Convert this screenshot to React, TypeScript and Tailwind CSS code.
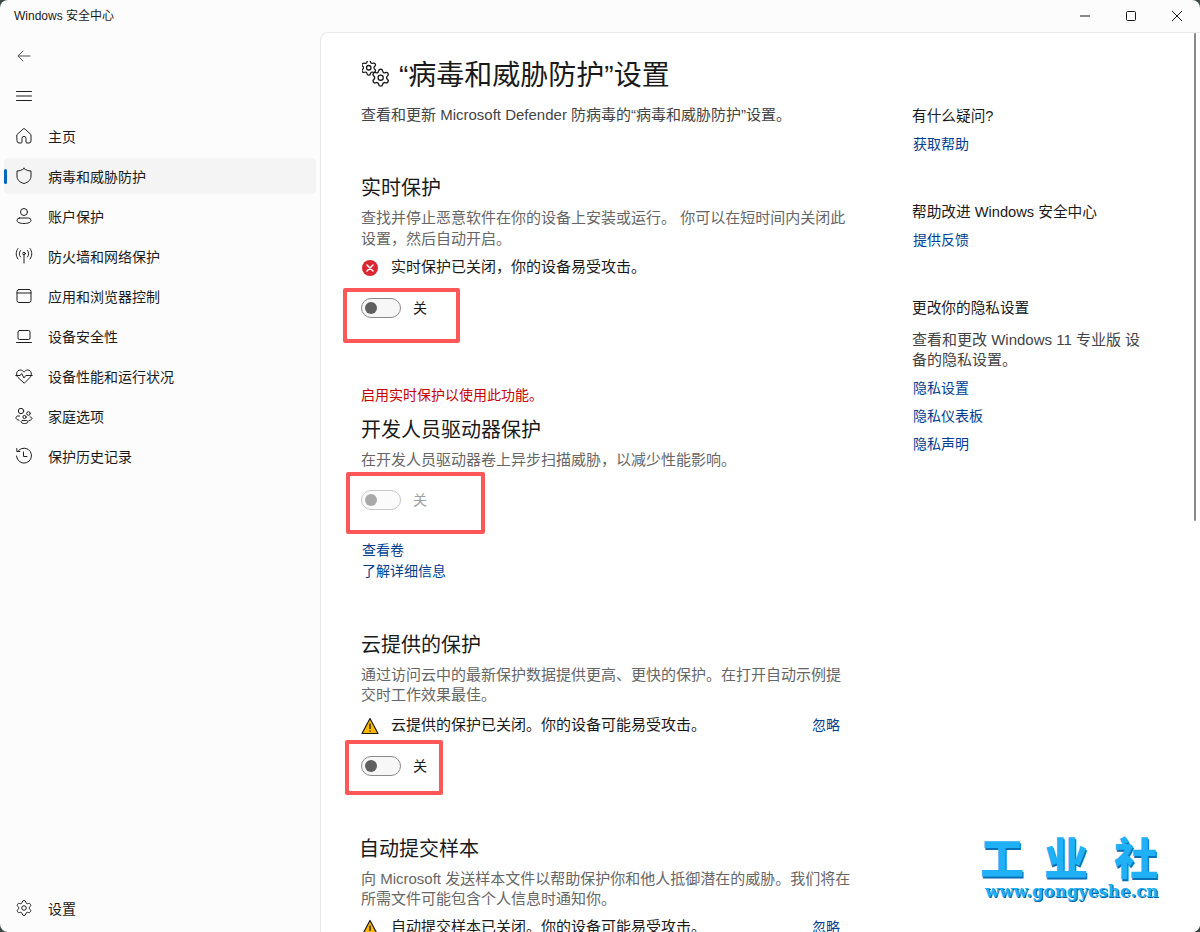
import type { ReactNode } from "react";

const gearPath =
  "M9.671 4.136a2.34 2.34 0 0 1 4.659 0 2.34 2.34 0 0 0 3.319 1.915 2.34 2.34 0 0 1 2.33 4.033 2.34 2.34 0 0 0 0 3.831 2.34 2.34 0 0 1-2.33 4.033 2.34 2.34 0 0 0-3.319 1.915 2.34 2.34 0 0 1-4.659 0 2.34 2.34 0 0 0-3.32-1.915 2.34 2.34 0 0 1-2.33-4.033 2.34 2.34 0 0 0 0-3.831A2.34 2.34 0 0 1 6.35 6.051a2.34 2.34 0 0 0 3.319-1.915";

function Icon({ children }: { children: ReactNode }) {
  return (
    <svg width="18" height="18" viewBox="0 0 18 18" fill="none" stroke="#1f1f1f" strokeWidth="1" strokeLinecap="round" strokeLinejoin="round" className="shrink-0">
      {children}
    </svg>
  );
}

const icons: Record<string, ReactNode> = {
  home: <path d="M2 7.7 8.2 1.9a1.2 1.2 0 0 1 1.6 0L16 7.7V14a2 2 0 0 1-2 2h-2a1 1 0 0 1-1-1v-3.6a2 2 0 0 0-4 0V15a1 1 0 0 1-1 1H4a2 2 0 0 1-2-2Z" />,
  shield: <path d="M9 1.5c2 1.6 4.2 2.4 7 2.5v5c0 3.7-2.4 6.2-7 7.5-4.6-1.3-7-3.8-7-7.5V4c2.800-.1 5-.9 7-2.500Z" />,
  user: (
    <>
      <circle cx="9" cy="5" r="3.500" />
      <path d="M4.500 11h9a2.500 2.500 0 0 1 2.500 2.500c0 1.800-3 3-7 3s-7-1.200-7-3A2.500 2.500 0 0 1 4.500 11Z" />
    </>
  ),
  radio: (
    <>
      <circle cx="9" cy="6.500" r="1.300" />
      <path d="M9 8v8M5.500 3.500c-1.600 1.800-1.600 4.700 0 6.500M12.500 3.500c1.600 1.800 1.600 4.700 0 6.500M3 1.500C.6 4.500.6 9 3 12M15 1.500c2.400 3 2.400 7.500 0 10.500" />
    </>
  ),
  app: (
    <>
      <rect x="2" y="2.500" width="14" height="13" rx="2" />
      <path d="M2 6h14" />
    </>
  ),
  laptop: (
    <>
      <rect x="3" y="3.500" width="12" height="9" rx="1.500" />
      <path d="M1.500 15.500h15" />
    </>
  ),
  heart: <path d="M9 16 3 10.500C.5 8 1.500 3 5.200 3 7 3 8.200 4 9 5.200 9.800 4 11 3 12.800 3c3.700 0 4.700 5 2.200 7.500ZM.8 8.500h4.400l1.500-2 2.300 4.500 1.800-2.500h6.400" />,
  family: (
    <>
      <circle cx="6" cy="4" r="2.700" />
      <circle cx="13.500" cy="6.500" r="1.800" />
      <circle cx="9.500" cy="10" r="1.600" />
      <path d="M4.500 9H2.800C1.800 9 1 9.800 1 10.800c0 1.300 1.200 2.200 3 2.400M15 10h.5c.8 0 1.500.7 1.500 1.500 0 1-1 1.800-3 2M7.500 13.500h4c.8 0 1.500.7 1.500 1.300 0 .9-1.500 1.700-3.500 1.700S6 15.700 6 14.800c0-.6.700-1.300 1.500-1.300Z" />
    </>
  ),
  history: (
    <>
      <path d="M3.500 3.500A7.500 7.500 0 1 1 1.500 9M1.800 1.500v3h3" />
      <path d="M8.500 5v4.500h3.500" />
    </>
  ),
};

const navItems = [
  { icon: "home", label: "主页" },
  { icon: "shield", label: "病毒和威胁防护", active: true },
  { icon: "user", label: "账户保护" },
  { icon: "radio", label: "防火墙和网络保护" },
  { icon: "app", label: "应用和浏览器控制" },
  { icon: "laptop", label: "设备安全性" },
  { icon: "heart", label: "设备性能和运行状况" },
  { icon: "family", label: "家庭选项" },
  { icon: "history", label: "保护历史记录" },
];

function NavRow({ icon, label, active }: { icon: ReactNode; label?: string; active?: boolean }) {
  return (
    <div className="h-10 flex items-center">
      <div className={`relative w-[312px] h-9 ml-1 flex items-center pl-[11px] gap-[15px] rounded-[5px] ${active ? "bg-[#f4f4f4]" : ""}`}>
        {active && <span className="absolute left-0 top-[11px] w-[3px] h-[15px] rounded-full bg-[#0067c0]" />}
        {icon}
        {label && <span className="mt-[2px] text-[14px] leading-5 text-[#1a1a1a]">{label}</span>}
      </div>
    </div>
  );
}

function Toggle({ disabled }: { disabled?: boolean }) {
  return (
    <div className="flex items-center h-5">
      <div className={`w-10 h-5 rounded-full border flex items-center pl-[3px] ${disabled ? "border-[#c6c6c6] bg-[#fbfbfb]" : "border-[#8a8a8a] bg-[#f7f7f7]"}`}>
        <span className={`w-3 h-3 rounded-full ${disabled ? "bg-[#a9a9a9]" : "bg-[#5f5f5f]"}`} />
      </div>
      <span className={`ml-3 text-[14px] leading-5 ${disabled ? "text-[#a0a0a0]" : "text-[#1a1a1a]"}`}>关</span>
    </div>
  );
}

function Warn() {
  return (
    <svg width="18" height="18" viewBox="0 0 18 18" className="shrink-0">
      <path d="M9 1.500 17 16.500H1Z" fill="#fcb900" stroke="#1a1a1a" strokeWidth="1.200" strokeLinejoin="round" />
      <path d="M9 6.500v5.500M9 13.500v1.300" stroke="#1a1a1a" strokeWidth="1.300" />
    </svg>
  );
}

function ErrorIcon() {
  return (
    <svg width="16" height="16" viewBox="0 0 16 16" className="shrink-0 ml-[1px]">
      <circle cx="8" cy="8" r="8" fill="#dc2632" />
      <path d="M5 5l6 6M11 5l-6 6" stroke="#fff" strokeWidth="1.500" strokeLinecap="round" />
    </svg>
  );
}

function Status({ icon, text, dismiss }: { icon: ReactNode; text: string; dismiss?: boolean }) {
  return (
    <div className="flex items-center h-5 text-[15px] leading-5 text-[#1a1a1a]">
      <span className="w-[30px] flex items-center">{icon}</span>
      <span className="mb-[2px] whitespace-nowrap">{text}</span>
      {dismiss && <a className="mb-[2px] ml-auto mr-[14px] text-[14px] text-[#003e92]">忽略</a>}
    </div>
  );
}

function Heading({ children, className }: { children: ReactNode; className: string }) {
  return <h2 className={`text-[20px] leading-7 text-[#1a1a1a] ${className}`}>{children}</h2>;
}

function Desc({ children, className }: { children: ReactNode; className: string }) {
  return <p className={`text-[15px] text-[#666666] ${className}`}>{children}</p>;
}

function Highlight({ className }: { className: string }) {
  return <div className={`absolute border-[4px] border-[#ff5757] rounded-[2px] ${className}`} />;
}

function SideLink({ children, className = "" }: { children: ReactNode; className?: string }) {
  return <a className={`block ml-px text-[14px] leading-5 text-[#003e92] ${className}`}>{children}</a>;
}

export default function App() {
  return (
    <div lang="zh-CN" className="w-[1200px] h-[932px] overflow-hidden bg-[#3a4a44] font-['Liberation_Sans','Noto_Sans_CJK_SC',sans-serif]">
      <div className="relative w-full h-full rounded-[8px] overflow-hidden bg-[#fcfcfc] flex flex-col">
        {/* title bar */}
        <div className="h-8 shrink-0 flex items-center justify-between">
          <span className="ml-[14px] text-[12px] text-[#1a1a1a]">Windows 安全中心</span>
          <div className="flex items-center">
            <div className="w-[46px] h-8 flex items-center justify-center">
              <svg width="10" height="10" viewBox="0 0 10 10"><path d="M0 5h10" stroke="#1a1a1a" /></svg>
            </div>
            <div className="w-[46px] h-8 flex items-center justify-center">
              <svg width="10" height="10" viewBox="0 0 10 10" fill="none"><rect x=".5" y=".5" width="9" height="9" rx="1" stroke="#1a1a1a" /></svg>
            </div>
            <div className="w-[46px] h-8 flex items-center justify-center">
              <svg width="10" height="10" viewBox="0 0 10 10"><path d="M0 0l10 10M10 0 0 10" stroke="#1a1a1a" /></svg>
            </div>
          </div>
        </div>

        <div className="flex-1 flex min-h-0">
          {/* sidebar */}
          <aside className="w-[320px] shrink-0 flex flex-col pt-1 pb-1">
            <NavRow
              icon={
                <Icon>
                  <path d="M15 9H3M8 4 3 9l5 5" stroke="#555" />
                </Icon>
              }
            />
            <NavRow
              icon={
                <Icon>
                  <path d="M1.500 4.500h15M1.500 9h15M1.500 13.500h15" />
                </Icon>
              }
            />
            {navItems.map((n) => (
              <NavRow key={n.label} icon={<Icon>{icons[n.icon]}</Icon>} label={n.label} active={n.active} />
            ))}
            <div className="mt-auto">
              <NavRow
                icon={
                  <svg width="18" height="18" viewBox="0 0 24 24" fill="none" stroke="#1f1f1f" strokeWidth="1.300" className="shrink-0">
                    <path d={gearPath} />
                    <circle cx="12" cy="12" r="3" />
                  </svg>
                }
                label="设置"
              />
            </div>
          </aside>

          {/* main panel */}
          <main className="relative flex-1 flex bg-white border-l border-t border-[#e8e8e8] rounded-tl-[8px] overflow-hidden pl-10 pt-6">
            <div className="w-[493px] shrink-0">
              <div className="flex items-center h-9">
                <svg width="28" height="28" viewBox="0 0 28 28" fill="none" stroke="#1a1a1a" className="shrink-0 ml-[1px] mr-[9px]">
                  <g transform="translate(-2.250 -2.250) scale(.75)" strokeWidth="1.700">
                    <path d={gearPath} />
                    <circle cx="12" cy="12" r="3" />
                  </g>
                  <g transform="translate(8.450 6.500) scale(.85)" strokeWidth="1.600">
                    <path d={gearPath} />
                    <circle cx="12" cy="12" r="3" />
                  </g>
                </svg>
                <h1 className="mt-[2px] text-[28px] leading-9 text-[#1a1a1a] whitespace-nowrap">“病毒和威胁防护”设置</h1>
              </div>
              <p className="mt-3 text-[15px] leading-5 text-[#444444] whitespace-nowrap">查看和更新 Microsoft Defender 防病毒的“病毒和威胁防护”设置。</p>

              <Heading className="mt-[49px]">实时保护</Heading>
              <Desc className="mt-[5px] leading-[21px]">查找并停止恶意软件在你的设备上安装或运行。 你可以在短时间内关闭此设置，然后自动开启。</Desc>
              <div className="mt-[9px]">
                <Status icon={<ErrorIcon />} text="实时保护已关闭，你的设备易受攻击。" />
              </div>
              <div className="relative mt-5">
                <Toggle />
                <Highlight className="left-[-18px] top-[-10px] w-[117px] h-[55px]" />
              </div>

              <p className="mt-[67px] text-[14px] leading-5 text-[#c80000]">启用实时保护以使用此功能。</p>
              <Heading className="mt-[11px]">开发人员驱动器保护</Heading>
              <Desc className="mt-[6px] leading-5">在开发人员驱动器卷上异步扫描威胁，以减少性能影响。</Desc>
              <div className="relative mt-5">
                <Toggle disabled />
                <Highlight className="left-[-15px] top-[-18px] w-[139px] h-[62px]" />
              </div>
              <SideLink className="mt-[30px]">查看卷</SideLink>
              <SideLink className="mt-[1px]">了解详细信息</SideLink>

              <Heading className="mt-[50px]">云提供的保护</Heading>
              <Desc className="mt-[6px] leading-5">通过访问云中的最新保护数据提供更高、更快的保护。在打开自动示例提交时工作效果最佳。</Desc>
              <div className="mt-[11px]">
                <Status icon={<Warn />} text="云提供的保护已关闭。你的设备可能易受攻击。" dismiss />
              </div>
              <div className="relative mt-5">
                <Toggle />
                <Highlight className="left-[-16px] top-[-16px] w-[98px] h-[55px]" />
              </div>

              <Heading className="mt-[59px] -ml-[2px]">自动提交样本</Heading>
              <Desc className="mt-[6px] leading-5">向 Microsoft 发送样本文件以帮助保护你和他人抵御潜在的威胁。我们将在所需文件可能包含个人信息时通知你。</Desc>
              <div className="mt-[9px]">
                <Status icon={<Warn />} text="自动提交样本已关闭。你的设备可能易受攻击。" dismiss />
              </div>
            </div>

            {/* right column */}
            <div className="ml-[58px] w-[232px] shrink-0">
              <p className="mt-[49px] text-[14.670px] leading-5 text-[#1a1a1a]">有什么疑问?</p>
              <SideLink className="mt-2">获取帮助</SideLink>
              <p className="mt-[48px] text-[14.670px] leading-5 text-[#1a1a1a]">帮助改进 Windows 安全中心</p>
              <SideLink className="mt-2">提供反馈</SideLink>
              <p className="mt-[48px] text-[14.670px] leading-5 text-[#1a1a1a]">更改你的隐私设置</p>
              <p className="mt-3 text-[15px] leading-5 text-[#444444]">查看和更改 Windows 11 专业版 设备的隐私设置。</p>
              <SideLink className="mt-2">隐私设置</SideLink>
              <SideLink className="mt-2">隐私仪表板</SideLink>
              <SideLink className="mt-2">隐私声明</SideLink>
            </div>

            {/* scrollbar */}
            <div className="absolute right-[4px] top-0 w-[2px] h-[488px] rounded-full bg-[#8a8a8a]" />
          </main>
        </div>

        {/* watermark */}
        <div className="absolute left-[980px] top-[835px] w-[180px]">
          <div className="flex justify-between pr-[2px] text-[44px] leading-[50px] font-black text-[#1fb0f5] [text-shadow:1px_2px_0_#0b6fb5]">
            <span>工</span>
            <span className="-ml-[6px]">业</span>
            <span>社</span>
          </div>
          <div className="ml-[5px] -mt-[3px] text-[16.600px] leading-[18px] font-bold text-[#1fb0f5] font-['DejaVu_Serif',serif] [text-shadow:1px_1px_0_#0b5f9e] whitespace-nowrap">www.gongyeshe.cn</div>
        </div>
      </div>
    </div>
  );
}
